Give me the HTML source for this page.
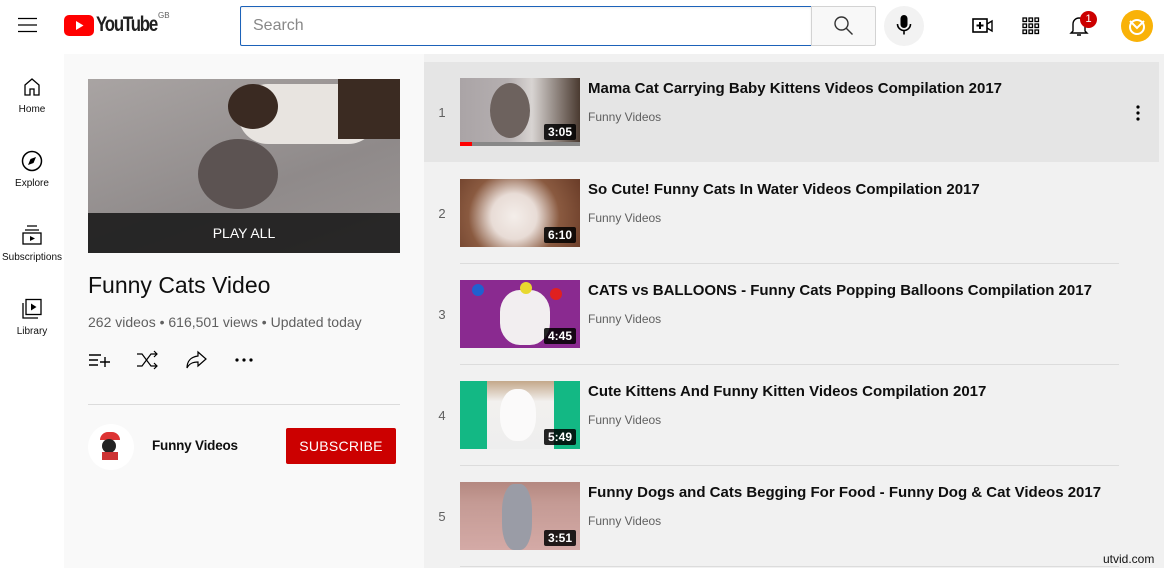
<!DOCTYPE html>
<html><head><meta charset="utf-8"><style>
*{margin:0;padding:0;box-sizing:border-box}
body{width:1164px;height:568px;overflow:hidden;font-family:"Liberation Sans",Arial,sans-serif;background:#f1f1f1;position:relative;color:#0f0f0f}
.abs{position:absolute}
#hdr{left:0;top:0;width:1164px;height:54px;background:#fff}
#side{left:0;top:54px;width:64px;height:514px;background:#fff}
#panel{left:64px;top:54px;width:360px;height:514px;background:#f9f9f9}
.nav{position:absolute;left:0;width:64px;text-align:center;font-size:10px;color:#0f0f0f}
.nav svg{display:block;margin:0 auto 6px}
.row{position:absolute;left:424px;width:736px;height:101px}
.num{position:absolute;left:0;width:36px;text-align:center;font-size:13px;color:#606060}
.th{position:absolute;left:36px;width:120px;height:68px;overflow:hidden}
.dur{position:absolute;right:4px;bottom:4px;background:rgba(0,0,0,.85);color:#fff;font-size:12px;font-weight:bold;padding:1px 4px;border-radius:2px}
.tt{position:absolute;left:164px;font-size:15px;font-weight:bold;color:#0f0f0f;white-space:nowrap}
.ch{position:absolute;left:164px;font-size:12px;color:#606060}
.div{position:absolute;left:460px;width:659px;height:1px;background:#dcdcdc}
</style></head><body>
<div id="hdr" class="abs"></div>
<div id="side" class="abs"></div>
<div id="panel" class="abs"></div>

<!-- header -->
<svg class="abs" style="left:18px;top:17px" width="20" height="16"><path d="M0 1.5h19M0 8h19M0 14.5h19" stroke="#000" stroke-width="1.3"/></svg>
<svg class="abs" style="left:64px;top:15px" width="30" height="22"><rect width="30" height="21" rx="5" fill="#f00"/><path d="M12 6v9l7.5-4.5z" fill="#fff"/></svg>
<div class="abs" style="left:96px;top:13px;font-size:21px;font-weight:bold;letter-spacing:-1.5px;transform:scaleX(.8);transform-origin:left;color:#212121">YouTube</div>
<div class="abs" style="left:158px;top:11px;font-size:8px;color:#606060">GB</div>
<div class="abs" style="left:240px;top:6px;width:572px;height:40px;border:1px solid #1c62b9;border-radius:2px 0 0 2px;background:#fff;box-shadow:inset 0 1px 2px #eee"><span style="position:absolute;left:12px;top:10px;font-size:16px;color:#888">Search</span></div>
<div class="abs" style="left:811px;top:6px;width:65px;height:40px;border:1px solid #d3d3d3;background:#f8f8f8;border-radius:0 2px 2px 0"></div>
<svg class="abs" style="left:833px;top:15px" width="22" height="22"><circle cx="8.5" cy="8.5" r="6.5" fill="none" stroke="#333" stroke-width="1.4"/><path d="M13 13l6.5 6.5" stroke="#333" stroke-width="1.4"/></svg>
<div class="abs" style="left:884px;top:6px;width:40px;height:40px;border-radius:50%;background:#f2f2f2"></div>
<svg class="abs" style="left:894px;top:14px" width="20" height="24"><rect x="6.5" y="1" width="7" height="13" rx="3.5" fill="#000"/><path d="M3.5 10a6.5 6.5 0 0 0 13 0M10 16.5v4" stroke="#000" stroke-width="1.6" fill="none"/></svg>
<svg class="abs" style="left:972px;top:17px" width="22" height="18"><rect x="1" y="2" width="14" height="13" fill="none" stroke="#000" stroke-width="1.6"/><path d="M8 5v7M4.5 8.5h7" stroke="#000" stroke-width="2"/><path d="M15 7l5-3v10l-5-3" fill="none" stroke="#000" stroke-width="1.4"/></svg>
<svg class="abs" style="left:1022px;top:17px" width="18" height="18" fill="none" stroke="#000" stroke-width="1.3"><rect x="1" y="1" width="3.5" height="3.5"/><rect x="7" y="1" width="3.5" height="3.5"/><rect x="13" y="1" width="3.5" height="3.5"/><rect x="1" y="7" width="3.5" height="3.5"/><rect x="7" y="7" width="3.5" height="3.5"/><rect x="13" y="7" width="3.5" height="3.5"/><rect x="1" y="13" width="3.5" height="3.5"/><rect x="7" y="13" width="3.5" height="3.5"/><rect x="13" y="13" width="3.5" height="3.5"/></svg>
<svg class="abs" style="left:1068px;top:14px" width="22" height="24"><path d="M5 17V10a6 6 0 0 1 12 0v7l2 2H3z M9 21h4" fill="none" stroke="#000" stroke-width="1.4"/></svg>
<div class="abs" style="left:1080px;top:11px;width:17px;height:17px;border-radius:50%;background:#cc0000;color:#fff;font-size:11px;text-align:center;line-height:17px">1</div>
<div class="abs" style="left:1121px;top:10px;width:32px;height:32px;border-radius:50%;background:#f9b208"></div>
<svg class="abs" style="left:1121px;top:10px" width="32" height="32"><path d="M9 11l7 7 7-7" fill="none" stroke="#fff" stroke-width="2"/><circle cx="16" cy="17" r="7" fill="none" stroke="#fff" stroke-width="2"/></svg>

<!-- sidebar -->
<div class="nav" style="top:76px"><svg width="20" height="22"><path d="M3 9l7-6 7 6v10h-5v-6h-4v6H3z" fill="none" stroke="#000" stroke-width="1.3"/></svg>Home</div>
<div class="nav" style="top:150px"><svg width="22" height="22"><circle cx="11" cy="11" r="9.5" fill="none" stroke="#000" stroke-width="1.5"/><path d="M15 7l-2.5 6L7 15l2.5-6z" fill="#000"/></svg>Explore</div>
<div class="nav" style="top:224px"><svg width="22" height="22"><path d="M6 2h10M4 6h14" stroke="#000" stroke-width="1.3"/><rect x="2" y="9" width="18" height="11" fill="none" stroke="#000" stroke-width="1.3"/><path d="M9 12v5l5-2.5z" fill="#000"/></svg>Subscriptions</div>
<div class="nav" style="top:298px"><svg width="22" height="22"><rect x="5" y="1.5" width="15" height="15" fill="none" stroke="#000" stroke-width="1.3"/><path d="M2 5v15h15" fill="none" stroke="#000" stroke-width="1.3"/><path d="M10 5.5v7l5.5-3.5z" fill="#000"/></svg>Library</div>

<!-- panel -->
<div class="abs" style="left:88px;top:79px;width:312px;height:174px;overflow:hidden;background:linear-gradient(160deg,#a9a4a3,#8f8a8a 60%,#9b9594)">
 <div class="abs" style="left:150px;top:5px;width:140px;height:60px;border-radius:40px;background:#e8e4e0"></div>
 <div class="abs" style="left:140px;top:5px;width:50px;height:45px;border-radius:50%;background:#3a2a22"></div>
 <div class="abs" style="left:250px;top:0;width:62px;height:60px;background:#3b2b22"></div>
 <div class="abs" style="left:110px;top:60px;width:80px;height:70px;border-radius:50%;background:#5c5352"></div>
 <div class="abs" style="left:0;top:134px;width:312px;height:40px;background:rgba(20,20,20,.85);color:#fff;text-align:center;line-height:40px;font-size:14px">PLAY ALL</div>
</div>
<div class="abs" style="left:88px;top:272px;font-size:23px;color:#0f0f0f">Funny Cats Video</div>
<div class="abs" style="left:88px;top:314px;font-size:14px;color:#606060">262 videos • 616,501 views • Updated today</div>
<svg class="abs" style="left:88px;top:350px" width="24" height="20"><path d="M1 5h12M1 10h9M1 15h9M12 12h10M17 7v10" stroke="#000" stroke-width="1.4"/></svg>
<svg class="abs" style="left:136px;top:349px" width="24" height="22" fill="none" stroke="#000" stroke-width="1.2"><path d="M1 5h5l9 12h6M1 17h5l9-12h6M18 2l3 3-3 3M18 14l3 3-3 3"/></svg>
<svg class="abs" style="left:185px;top:349px" width="24" height="22" fill="none" stroke="#000" stroke-width="1.2"><path d="M13 3l8 7-8 7v-4c-6 0-9 2-11 6 0-6 3-11 11-12z"/></svg>
<svg class="abs" style="left:234px;top:356px" width="20" height="8"><circle cx="3" cy="4" r="1.6"/><circle cx="10" cy="4" r="1.6"/><circle cx="17" cy="4" r="1.6"/></svg>
<div class="abs" style="left:88px;top:404px;width:312px;height:1px;background:#dcdcdc"></div>
<div class="abs" style="left:88px;top:424px;width:46px;height:46px;border-radius:50%;background:#fff;overflow:hidden">
 <div class="abs" style="left:12px;top:8px;width:20px;height:8px;background:#d33;border-radius:8px 8px 0 0"></div>
 <div class="abs" style="left:14px;top:15px;width:14px;height:14px;background:#222;border-radius:50%"></div>
 <div class="abs" style="left:14px;top:28px;width:16px;height:8px;background:#c33"></div>
</div>
<div class="abs" style="left:152px;top:438px;font-size:13.5px;font-weight:bold;letter-spacing:-.2px">Funny Videos</div>
<div class="abs" style="left:286px;top:428px;width:110px;height:36px;background:#cc0000;border-radius:2px;color:#fff;font-size:14px;letter-spacing:.3px;text-align:center;line-height:36px">SUBSCRIBE</div>

<!-- list -->
<div class="abs" style="left:424px;top:62px;width:735px;height:100px;background:#e5e5e5"></div>
<div class="row" style="top:62px">
 <div class="num" style="top:43px">1</div>
 <div class="th" style="top:16px;background:linear-gradient(90deg,#aaa4a6,#b5afb0 40%,#d8d4d2 60%,#4a3a30)">
  <div class="abs" style="left:30px;top:5px;width:40px;height:55px;border-radius:50%;background:#6d625e"></div>
  <div class="abs" style="left:0;bottom:0;width:120px;height:4px;background:#888"></div><div class="abs" style="left:0;bottom:0;width:12px;height:4px;background:#f00"></div>
  <div class="dur" style="bottom:6px">3:05</div></div>
 <div class="tt" style="top:18px">Mama Cat Carrying Baby Kittens Videos Compilation 2017</div>
 <div class="ch" style="top:48px">Funny Videos</div>
 <svg class="abs" style="left:711px;top:43px" width="6" height="16"><circle cx="3" cy="2" r="1.6"/><circle cx="3" cy="8" r="1.6"/><circle cx="3" cy="14" r="1.6"/></svg>
</div>
<div class="row" style="top:163px">
 <div class="num" style="top:43px">2</div>
 <div class="th" style="top:16px;background:radial-gradient(circle at 45% 55%,#f4eeea 0,#e8dcd6 30%,#8a5a40 60%,#6a3c28)"><div class="dur">6:10</div></div>
 <div class="tt" style="top:18px">So Cute! Funny Cats In Water Videos Compilation 2017</div>
 <div class="ch" style="top:48px">Funny Videos</div>
</div>
<div class="div" style="top:263px"></div>
<div class="row" style="top:264px">
 <div class="num" style="top:43px">3</div>
 <div class="th" style="top:16px;background:#8a2a90"><div class="abs" style="left:40px;top:10px;width:50px;height:55px;border-radius:40%;background:#f2eef0"></div><div class="abs" style="left:60px;top:2px;width:12px;height:12px;border-radius:50%;background:#e8d830"></div><div class="abs" style="left:90px;top:8px;width:12px;height:12px;border-radius:50%;background:#e02020"></div><div class="abs" style="left:12px;top:4px;width:12px;height:12px;border-radius:50%;background:#2060d0"></div><div class="dur">4:45</div></div>
 <div class="tt" style="top:18px">CATS vs BALLOONS - Funny Cats Popping Balloons Compilation 2017</div>
 <div class="ch" style="top:48px">Funny Videos</div>
</div>
<div class="div" style="top:364px"></div>
<div class="row" style="top:365px">
 <div class="num" style="top:43px">4</div>
 <div class="th" style="top:16px;background:#13b884"><div class="abs" style="left:27px;top:0;width:67px;height:68px;background:linear-gradient(#c4a88a,#f2f0ee 30%,#eee)"></div><div class="abs" style="left:40px;top:8px;width:36px;height:52px;border-radius:45%;background:#fbfafa"></div><div class="dur">5:49</div></div>
 <div class="tt" style="top:18px">Cute Kittens And Funny Kitten Videos Compilation 2017</div>
 <div class="ch" style="top:48px">Funny Videos</div>
</div>
<div class="div" style="top:465px"></div>
<div class="row" style="top:466px">
 <div class="num" style="top:43px">5</div>
 <div class="th" style="top:16px;background:linear-gradient(#b48880,#c49a94 30%,#d4aaa6)"><div class="abs" style="left:42px;top:2px;width:30px;height:66px;border-radius:40%;background:#9a9ca6"></div><div class="dur">3:51</div></div>
 <div class="tt" style="top:18px">Funny Dogs and Cats Begging For Food - Funny Dog &amp; Cat Videos 2017</div>
 <div class="ch" style="top:48px">Funny Videos</div>
</div>
<div class="div" style="top:566px"></div>
<div class="abs" style="left:1103px;top:552px;font-size:12px;color:#111">utvid.com</div>
</body></html>
